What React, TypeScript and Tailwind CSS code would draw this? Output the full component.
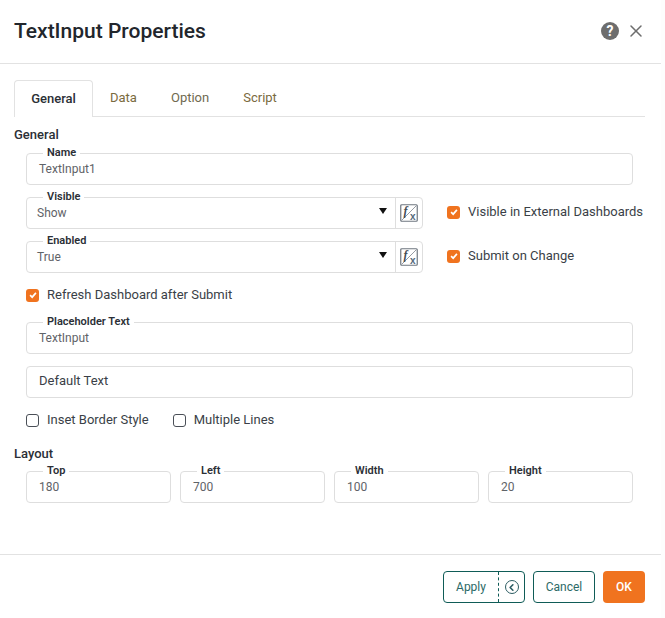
import { ChevronLeft, X } from "lucide-react";

function Check({ checked }: { checked?: boolean }) {
  if (checked) {
    return (
      <span className="flex h-[13px] w-[13px] shrink-0 items-center justify-center rounded-[3px] bg-[#f0731f]">
        <svg viewBox="0 0 12 12" className="h-[10px] w-[10px]">
          <path d="M2.5 6.2 5 8.6 9.5 3.4" fill="none" stroke="#fff" strokeWidth="2" />
        </svg>
      </span>
    );
  }
  return <span className="h-[13px] w-[13px] shrink-0 rounded-[3px] border border-[#4a4f57] bg-white" />;
}

function CheckRow({ label, checked, className }: { label: string; checked?: boolean; className?: string }) {
  return (
    <div className={`flex items-center gap-2 text-[13px] leading-4 text-[#3a3f47] ${className ?? ""}`}>
      <Check checked={checked} />
      <span className="whitespace-nowrap">{label}</span>
    </div>
  );
}

function FieldLabel({ children }: { children: string }) {
  return (
    <span className="absolute left-4 top-[-8px] bg-white px-1 text-[11px] leading-[14px] font-semibold text-[#2b2f36]">
      {children}
    </span>
  );
}

function Field({ label, value, className }: { label?: string; value: string; className?: string }) {
  return (
    <div className={`relative flex h-8 items-center rounded-[4px] border border-[#dedede] pl-3 ${className ?? ""}`}>
      {label && <FieldLabel>{label}</FieldLabel>}
      {label ? (
        <span className="text-xs text-[#5f6368]">{value}</span>
      ) : (
        <span className="mb-[2px] text-[13px] text-[#3a3f47]">{value}</span>
      )}
    </div>
  );
}

function FxIcon() {
  return (
    <svg viewBox="0 0 18 18" className="h-[18px] w-[18px]">
      <rect x="0.75" y="0.75" width="16.5" height="16.5" rx="1" fill="#fff" stroke="#6f7780" strokeWidth="1.2" />
      <path d="M1.5 16.5 16.5 1.5" stroke="#8a9097" strokeWidth="0.9" />
      <text x="3.5" y="10.5" fontFamily="'Liberation Serif', serif" fontStyle="italic" fontWeight="700" fontSize="12" fill="#444c54">
        f
      </text>
      <text x="10" y="16" fontFamily="'Liberation Sans', sans-serif" fontWeight="700" fontSize="10" fill="#55687a">
        x
      </text>
    </svg>
  );
}

function SelectField({ label, value }: { label: string; value: string }) {
  return (
    <div className="relative flex h-8 w-[397px] items-center rounded-[4px] border border-[#dedede] pl-[10px] text-xs text-[#5f6368]">
      <FieldLabel>{label}</FieldLabel>
      <span className="flex-1">{value}</span>
      <svg viewBox="0 0 8 6" className="mr-2 mb-1 h-[6px] w-2">
        <path d="M0 0h8L4 6z" fill="#111" />
      </svg>
      <span className="flex h-full w-[27px] items-center justify-center border-l border-[#dedede]">
        <FxIcon />
      </span>
    </div>
  );
}

export default function App() {
  return (
    <div className="h-[618px] w-[665px] overflow-hidden bg-[#fdfdfd] font-['Roboto',sans-serif]">
      <div className="flex h-full w-[661px] flex-col bg-white">
        {/* Header */}
        <div className="flex h-[64px] shrink-0 items-center justify-between border-b border-[#e2e2e2] pr-[15px] pb-[2px] pl-[14px]">
          <h1 className="text-[21px] leading-6 font-medium text-[#22262c]">TextInput Properties</h1>
          <div className="flex items-center gap-[7px]">
            <span className="flex h-[18px] w-[18px] items-center justify-center rounded-full bg-[#6d6d6d] text-[14px] leading-none font-bold text-white">
              ?
            </span>
            <X className="h-5 w-5 text-[#6d6d6d]" strokeWidth={1.8} />
          </div>
        </div>

        {/* Body */}
        <div className="flex-1 pt-4 pl-[14px]">
          <div className="flex h-[37px] w-[631px] items-end border-b border-[#e2e2e2] text-[13px] text-[#7a6a3e]">
            <div className="mb-[-1px] flex h-[37px] w-[79px] items-center justify-center rounded-t-[4px] border border-b-0 border-[#e2e2e2] bg-white font-medium text-[#2b2f36]">
              General
            </div>
            <div className="flex h-9 items-center px-[17px]">Data</div>
            <div className="flex h-9 items-center px-[17px] text-[#6f6a50]">Option</div>
            <div className="flex h-9 items-center px-[17px]">Script</div>
          </div>

          <div className="mt-[10px] text-[13px] leading-4 font-medium text-[#2b2f36]">General</div>

          <div className="pl-3">
            <Field label="Name" value="TextInput1" className="mt-[10px] w-[607px]" />

            <div className="mt-[12px] flex items-center gap-6">
              <SelectField label="Visible" value="Show" />
              <CheckRow label="Visible in External Dashboards" checked className="mb-[2px]" />
            </div>
            <div className="mt-[12px] flex items-center gap-6">
              <SelectField label="Enabled" value="True" />
              <CheckRow label="Submit on Change" checked className="mb-[2px]" />
            </div>

            <div className="mt-[14px]">
              <CheckRow label="Refresh Dashboard after Submit" checked />
            </div>

            <Field label="Placeholder Text" value="TextInput" className="mt-[19px] w-[607px]" />
            <Field value="Default Text" className="mt-[12px] w-[607px]" />

            <div className="mt-[14px] flex gap-6">
              <CheckRow label="Inset Border Style" />
              <CheckRow label="Multiple Lines" />
            </div>
          </div>

          <div className="mt-[18px] text-[13px] leading-4 font-medium text-[#2b2f36]">Layout</div>
          <div className="mt-[9px] flex w-[619px] gap-[9px] pl-3">
            <Field label="Top" value="180" className="w-[145px]" />
            <Field label="Left" value="700" className="w-[145px]" />
            <Field label="Width" value="100" className="w-[145px]" />
            <Field label="Height" value="20" className="w-[145px]" />
          </div>
        </div>

        {/* Footer */}
        <div className="flex h-[64px] shrink-0 items-start justify-end gap-2 border-t border-[#e2e2e2] pt-4 pr-4 text-xs">
          <div className="flex h-8 w-[82px] items-center rounded-[4px] border border-[#0f5c57] text-[#2c6a66]">
            <span className="flex h-full w-[55px] items-center justify-center border-r border-dashed border-[#0f5c57]">Apply</span>
            <span className="flex flex-1 items-center justify-center">
              <span className="flex h-[14px] w-[14px] items-center justify-center rounded-full border-[1.5px] border-[#2c5c62]">
                <ChevronLeft className="h-[11px] w-[11px] text-[#2c5c62]" strokeWidth={3.5} />
              </span>
            </span>
          </div>
          <div className="flex h-8 w-[62px] items-center justify-center rounded-[4px] border border-[#0f5c57] text-[#2c6a66]">
            Cancel
          </div>
          <div className="flex h-8 w-[42px] items-center justify-center rounded-[4px] bg-[#f0731f] font-medium text-white">
            OK
          </div>
        </div>
      </div>
    </div>
  );
}
